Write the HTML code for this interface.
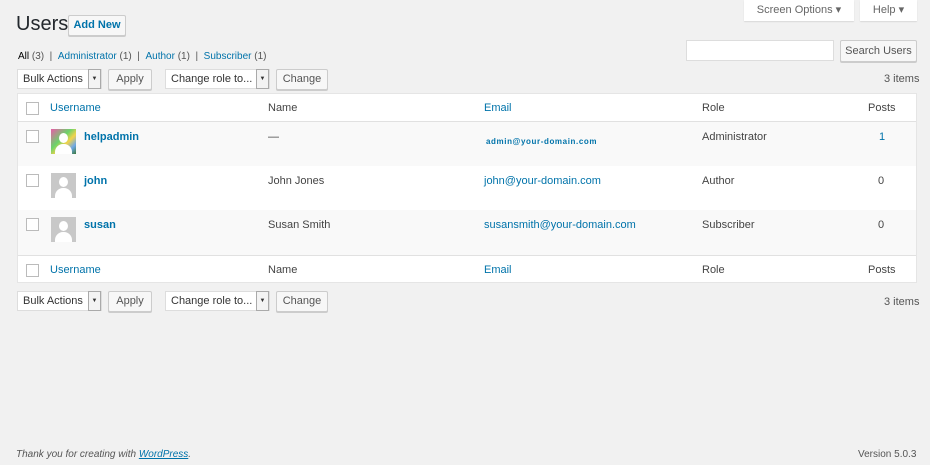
<!DOCTYPE html>
<html><head><style>
*{box-sizing:border-box;margin:0;padding:0}
body{width:930px;height:465px;background:#f1f1f1;font-family:"Liberation Sans",sans-serif;font-size:11px;color:#444;position:relative;overflow:hidden}
.a{position:absolute}
a,.lnk{color:#0073aa;text-decoration:none}
.btn{position:absolute;background:#f7f7f7;border:1px solid #ccc;border-radius:2px;color:#555;font-size:11px;text-align:center;box-shadow:0 1px 0 #ccc}
.sel{position:absolute;background:#fff;border:1px solid #ddd;color:#333;font-size:11px;padding-left:5px}
.sel i{position:absolute;right:0;top:-1px;bottom:-1px;width:13px;border:1px solid #aaa;background:#f3f3f3;font-style:normal;font-size:6px;text-align:center;line-height:19px}
.tbl{position:absolute;left:17px;width:900px;border:1px solid #e5e5e5;background:#fff}
.row{position:absolute;left:0;width:898px}
.cb{position:absolute;left:8px;width:13px;height:13px;border:1px solid #bbb;background:#fff}
.av{position:absolute;left:33px;width:25px;height:25px;background:#c8c8c8;overflow:hidden}
.av:before{content:"";position:absolute;left:8px;top:4px;width:9px;height:10px;border-radius:50%;background:#fff}
.av:after{content:"";position:absolute;left:4px;top:15px;width:17px;height:14px;border-radius:8px 8px 0 0;background:#fff}
</style></head><body>
<div class="a" style="left:16px;top:13px;font-size:20px;color:#23282d">Users</div>
<div class="btn" style="left:68px;top:15px;width:58px;height:21px;line-height:19px;color:#0073aa;font-weight:bold;background:#f7f7f7">Add New</div>
<div class="a" style="left:744px;top:0;width:110px;height:21px;background:#fff;box-shadow:0 1px 1px rgba(0,0,0,.1);color:#666;text-align:center;line-height:20px">Screen Options ▾</div>
<div class="a" style="left:860px;top:0;width:57px;height:21px;background:#fff;box-shadow:0 1px 1px rgba(0,0,0,.1);color:#666;text-align:center;line-height:20px">Help ▾</div>
<div class="a" style="left:18px;top:51px;font-size:10px;color:#555"><b style="color:#000;font-weight:normal">All</b> (3) &nbsp;| &nbsp;<span class="lnk">Administrator</span> (1) &nbsp;| &nbsp;<span class="lnk">Author</span> (1) &nbsp;| &nbsp;<span class="lnk">Subscriber</span> (1)</div>
<div class="a" style="left:686px;top:40px;width:148px;height:21px;background:#fff;border:1px solid #ddd"></div>
<div class="btn" style="left:840px;top:40px;width:77px;height:22px;line-height:20px">Search Users</div>
<div class="a" style="left:884px;top:73px;color:#555">3 items</div>

<div class="sel" style="left:17px;top:69px;width:85px;height:20px;line-height:18px">Bulk Actions<i>▼</i></div>
<div class="btn" style="left:108px;top:69px;width:44px;height:21px;line-height:19px">Apply</div>
<div class="sel" style="left:165px;top:69px;width:105px;height:20px;line-height:18px">Change role to...<i>▼</i></div>
<div class="btn" style="left:276px;top:69px;width:52px;height:21px;line-height:19px">Change</div>

<div class="tbl" style="top:93px;height:190px">
 <div class="row" style="top:0;height:28px;border-bottom:1px solid #e1e1e1;font-size:11px">
  <div class="cb" style="top:8px"></div>
  <span class="a lnk" style="left:32px;top:8px">Username</span>
  <span class="a" style="left:250px;top:8px">Name</span>
  <span class="a lnk" style="left:466px;top:8px">Email</span>
  <span class="a" style="left:684px;top:8px">Role</span>
  <span class="a" style="left:850px;top:8px">Posts</span>
 </div>
 <div class="row" style="top:28px;height:44px;background:#f9f9f9">
  <div class="cb" style="top:8px"></div>
  <div class="av" style="top:7px;background:linear-gradient(135deg,#e85ca8,#6bd36b 40%,#f3d34a 60%,#6fa8e8 80%,#3b7a3b)"></div>
  <b class="a lnk" style="left:66px;top:9px">helpadmin</b>
  <span class="a" style="left:250px;top:9px">—</span>
  <b class="a lnk" style="left:468px;top:15px;font-size:8px;letter-spacing:.6px">admin@your-domain.com</b>
  <span class="a" style="left:684px;top:9px">Administrator</span>
  <span class="a lnk" style="left:861px;top:9px">1</span>
 </div>
 <div class="row" style="top:72px;height:44px">
  <div class="cb" style="top:8px"></div>
  <div class="av" style="top:7px"></div>
  <b class="a lnk" style="left:66px;top:9px">john</b>
  <span class="a" style="left:250px;top:9px">John Jones</span>
  <span class="a lnk" style="left:466px;top:9px">john@your-domain.com</span>
  <span class="a" style="left:684px;top:9px">Author</span>
  <span class="a" style="left:860px;top:9px">0</span>
 </div>
 <div class="row" style="top:116px;height:45px;background:#f9f9f9">
  <div class="cb" style="top:8px"></div>
  <div class="av" style="top:7px"></div>
  <b class="a lnk" style="left:66px;top:9px">susan</b>
  <span class="a" style="left:250px;top:9px">Susan Smith</span>
  <span class="a lnk" style="left:466px;top:9px">susansmith@your-domain.com</span>
  <span class="a" style="left:684px;top:9px">Subscriber</span>
  <span class="a" style="left:860px;top:9px">0</span>
 </div>
 <div class="row" style="top:161px;height:28px;border-top:1px solid #e1e1e1">
  <div class="cb" style="top:8px"></div>
  <span class="a lnk" style="left:32px;top:8px">Username</span>
  <span class="a" style="left:250px;top:8px">Name</span>
  <span class="a lnk" style="left:466px;top:8px">Email</span>
  <span class="a" style="left:684px;top:8px">Role</span>
  <span class="a" style="left:850px;top:8px">Posts</span>
 </div>
</div>

<div class="sel" style="left:17px;top:291px;width:85px;height:20px;line-height:18px">Bulk Actions<i>▼</i></div>
<div class="btn" style="left:108px;top:291px;width:44px;height:21px;line-height:19px">Apply</div>
<div class="sel" style="left:165px;top:291px;width:105px;height:20px;line-height:18px">Change role to...<i>▼</i></div>
<div class="btn" style="left:276px;top:291px;width:52px;height:21px;line-height:19px">Change</div>
<div class="a" style="left:884px;top:296px;color:#555">3 items</div>

<div class="a" style="left:16px;top:449px;font-size:10px;font-style:italic;color:#555">Thank you for creating with <span class="lnk" style="text-decoration:underline">WordPress</span>.</div>
<div class="a" style="left:858px;top:449px;font-size:10px;color:#555">Version 5.0.3</div>
</body></html>
